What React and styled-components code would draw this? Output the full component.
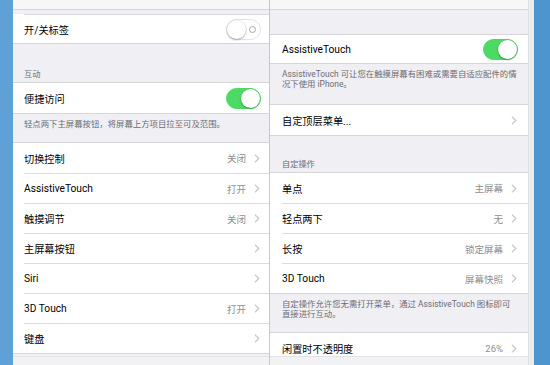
import React from "react";
import styled, { createGlobalStyle } from "styled-components";

const GlobalStyle = createGlobalStyle`
  html, body {
    margin: 0;
    padding: 0;
    background: #5b9dd5;
  }
  body {
    font-family: "Roboto", "Noto Sans CJK SC", sans-serif;
    -webkit-font-smoothing: antialiased;
  }
`;

const Screen = styled.div`
  display: flex;
  width: 550px;
  height: 365px;
  overflow: hidden;
`;

const Edge = styled.div`
  flex: ${({ $grow }) => ($grow ? 1 : "none")};
  width: ${({ $w }) => $w}px;
  background: ${({ $color }) => $color};
`;

const Panel = styled.div`
  display: flex;
  flex-direction: column;
  width: ${({ $w }) => $w}px;
  background: #efeff4;
  border-right: ${({ $divider }) => ($divider ? "1px solid #c8c7cc" : "none")};
`;

const ScrollStrip = styled.div`
  width: 5px;
  background: #ececf0;
  border-left: 1px solid #e2e2e6;
`;

const Content = styled.div`
  flex: 1;
  overflow: hidden;
`;

const BottomBar = styled.div`
  height: 8px;
  background: #f2f2f4;
  border-top: 1px solid #e4e4e8;
`;

const Nav = styled.div`
  height: 9px;
  overflow: hidden;
  background: #f7f7f8;
  border-bottom: 1px solid #d6d6da;
  display: flex;
  align-items: flex-start;
  padding-left: ${({ $pad }) => $pad}px;
`;

const NavInner = styled.div`
  display: flex;
  align-items: baseline;
  margin-top: -10px;
  font-size: 11px;
  line-height: 12px;
  white-space: nowrap;
`;

const NavBack = styled.span`
  color: #157efb;
  width: ${({ $w }) => $w}px;
`;

const NavTitle = styled.span`
  color: #1a1a1a;
  font-weight: 600;
`;

const Gap = styled.div`
  height: ${({ $h }) => $h}px;
`;

const Header = styled.div`
  height: ${({ $h }) => $h}px;
  box-sizing: border-box;
  display: flex;
  align-items: flex-end;
  padding: 0 0 3px ${({ $pad }) => $pad}px;
  font-size: 8.2px;
  color: #6d6d72;
`;

const Footer = styled.div`
  height: ${({ $h }) => $h}px;
  box-sizing: border-box;
  padding: 5px 8px 0 ${({ $pad }) => $pad}px;
  font-size: 8.4px;
  line-height: 10px;
  color: #6d6d72;
  white-space: nowrap;
`;

const Group = styled.div`
  background: #fff;
  border-top: ${({ $top }) => ($top ? "1px solid #d6d6da" : "none")};
  border-bottom: 1px solid #d6d6da;
`;

const Row = styled.div`
  display: flex;
  align-items: center;
  height: ${({ $h }) => $h || 30}px;
  box-sizing: border-box;
  margin-left: ${({ $pad }) => $pad}px;
  padding-right: ${({ $right }) => $right}px;
  border-top: ${({ $sep }) => ($sep ? "1px solid #dcdce0" : "none")};
`;

const Label = styled.div`
  flex: 1;
  font-size: 10.2px;
  color: #000;
  white-space: nowrap;
`;

const Value = styled.div`
  font-size: 9.5px;
  color: #8e8e93;
  margin-right: 8px;
  white-space: nowrap;
`;

const Switch = styled.div`
  position: relative;
  width: 35px;
  height: 21px;
  box-sizing: border-box;
  border-radius: 11px;
  background: ${({ $on }) => ($on ? "#4cd964" : "#fff")};
  border: 1px solid ${({ $on }) => ($on ? "#4cd964" : "#e3e3e6")};
`;

const Knob = styled.div`
  position: absolute;
  top: 0;
  left: ${({ $on }) => ($on ? "14px" : "0")};
  width: 19px;
  height: 19px;
  border-radius: 50%;
  background: #fff;
  box-shadow: 0 1px 2px rgba(0, 0, 0, 0.3), 0 0 0 0.5px rgba(0, 0, 0, 0.08);
`;

const OffMark = styled.div`
  position: absolute;
  top: 6px;
  right: 4px;
  width: 5px;
  height: 5px;
  border-radius: 50%;
  border: 1px solid #a9a9ad;
`;

const Chevron = () => (
  <svg width="6" height="9" viewBox="0 0 6 9">
    <path d="M1 0.8 L4.8 4.5 L1 8.2" fill="none" stroke="#c7c7cc" strokeWidth="1.2" />
  </svg>
);

const Toggle = ({ on }) => (
  <Switch $on={on}>
    {!on && <OffMark />}
    <Knob $on={on} />
  </Switch>
);

const Item = ({ label, value, toggle, pad, right, sep, h }) => (
  <Row $pad={pad} $right={right} $sep={sep} $h={h}>
    <Label>{label}</Label>
    {value && <Value>{value}</Value>}
    {toggle !== undefined ? <Toggle on={toggle} /> : <Chevron />}
  </Row>
);

const leftList = [
  { label: "切换控制", value: "关闭" },
  { label: "AssistiveTouch", value: "打开" },
  { label: "触摸调节", value: "关闭" },
  { label: "主屏幕按钮" },
  { label: "Siri" },
  { label: "3D Touch", value: "打开" },
  { label: "键盘" },
];

const actions = [
  { label: "单点", value: "主屏幕" },
  { label: "轻点两下", value: "无" },
  { label: "长按", value: "锁定屏幕" },
  { label: "3D Touch", value: "屏幕快照" },
];

const App = () => {
  return (
    <>
      <GlobalStyle />
      <Screen>
        <Edge $w={13} $color="#5fa0d7" />
        <Panel $w={256} $divider>
          <Content>
            <Nav $pad={11}>
              <NavInner>
                <NavBack $w={96}>‹ 通用</NavBack>
                <NavTitle>辅助功能</NavTitle>
              </NavInner>
            </Nav>
            <Gap $h={4} />
            <Group>
              <Row $pad={11} $right={8} $sep $h={29}>
                <Label>开/关标签</Label>
                <Toggle on={false} />
              </Row>
            </Group>
            <Header $h={38} $pad={11}>互动</Header>
            <Group $top>
              <Item label="便捷访问" toggle={true} pad={11} right={8} h={30} />
            </Group>
            <Footer $h={28} $pad={11}>
              轻点两下主屏幕按钮，将屏幕上方项目拉至可及范围。
            </Footer>
            <Group $top>
              {leftList.map((it, i) => (
                <Item key={i} {...it} pad={11} right={9} sep={i > 0} />
              ))}
            </Group>
          </Content>
          <BottomBar />
        </Panel>
        <Panel $w={258}>
          <Content>
            <Nav $pad={12}>
              <NavInner>
                <NavBack $w={78}>‹ 辅助功能</NavBack>
                <NavTitle>AssistiveTouch</NavTitle>
              </NavInner>
            </Nav>
            <Gap $h={24} />
            <Group $top>
              <Item label="AssistiveTouch" toggle={true} pad={12} right={10} h={28} />
            </Group>
            <Footer $h={40} $pad={12}>
              AssistiveTouch 可让您在触摸屏幕有困难或需要自适应配件的情
              <br />
              况下使用 iPhone。
            </Footer>
            <Group $top>
              <Item label="自定顶层菜单..." pad={12} right={11} />
            </Group>
            <Header $h={36} $pad={12}>自定操作</Header>
            <Group $top>
              {actions.map((it, i) => (
                <Item key={i} {...it} pad={12} right={11} sep={i > 0} />
              ))}
            </Group>
            <Footer $h={38} $pad={12}>
              自定操作允许您无需打开菜单，通过 AssistiveTouch 图标即可
              <br />
              直接进行互动。
            </Footer>
            <Group $top>
              <Item label="闲置时不透明度" value="26%" pad={12} right={11} />
            </Group>
          </Content>
          <BottomBar />
        </Panel>
        <ScrollStrip />
        <Edge $grow $color="#4d95ce" />
      </Screen>
    </>
  );
};

export default App;
